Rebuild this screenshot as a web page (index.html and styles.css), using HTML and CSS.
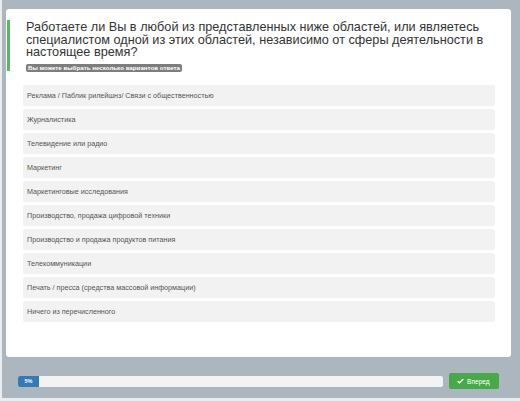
FILE: index.html
```html
<!DOCTYPE html>
<html lang="ru">
<head>
<meta charset="utf-8">
<link rel="stylesheet" href="styles.css">
</head>
<body>
<div class="page">
  <div class="card">
    <div class="question">
      <div class="title">Работаете ли Вы в любой из представленных ниже областей, или являетесь специалистом одной из этих областей, независимо от сферы деятельности в настоящее время?</div>
      <span class="badge">Вы можете выбрать несколько вариантов ответа</span>
    </div>
    <div class="options">
      <div class="option">Реклама / Паблик рилейшнз/ Связи с общественностью</div>
      <div class="option">Журналистика</div>
      <div class="option">Телевидение или радио</div>
      <div class="option">Маркетинг</div>
      <div class="option">Маркетинговые исследования</div>
      <div class="option">Производство, продажа цифровой техники</div>
      <div class="option">Производство и продажа продуктов питания</div>
      <div class="option">Телекоммуникации</div>
      <div class="option">Печать / пресса (средства массовой информации)</div>
      <div class="option">Ничего из перечисленного</div>
    </div>
  </div>
  <div class="footer">
    <div class="progress"><div class="fill" style="width:21px">5%</div></div>
    <button class="next"><svg class="check" viewBox="0 0 10 8" width="7" height="6"><path d="M1 4.2 L3.6 6.6 L9 1.2" fill="none" stroke="#fff" stroke-width="1.9"/></svg>Вперед</button>
  </div>
</div>
</body>
</html>
```
FILE: styles.css
```css
html, body {
  margin: 0;
  padding: 0;
  background: #e9edf0;
}
body {
  font-family: "Liberation Sans", Arial, sans-serif;
  width: 520px;
  height: 401px;
  overflow: hidden;
}
.page {
  margin-left: 2px;
  width: 518px;
  height: 398px;
  background: #abb6be;
  padding: 9px 0 0 4px;
  box-sizing: border-box;
}
.card {
  width: 505px;
  height: 348px;
  background: #fff;
  border-radius: 3px;
  padding: 11px 0 0 1px;
  box-sizing: border-box;
}
.question {
  border-left: 3px solid #5cb85c;
  padding-left: 16px;
  height: 51px;
  box-sizing: border-box;
}
.title {
  font-size: 12.7px;
  line-height: 12.5px;
  color: #333;
  width: 480px;
  padding-top: 1px;
}
.badge {
  display: inline-block;
  margin-top: 5px;
  background: #7d7d7d;
  color: #fff;
  font-size: 6.2px;
  font-weight: bold;
  line-height: 8px;
  height: 8px;
  padding: 0 2px;
  border-radius: 2px;
  vertical-align: top;
}
.options {
  margin: 14px 0 0 16px;
  width: 472px;
  display: flex;
  flex-direction: column;
  gap: 3px;
}
.option {
  height: 21px;
  line-height: 21px;
  background: #f2f2f2;
  border-radius: 2px;
  padding-left: 4px;
  font-size: 7.2px;
  color: #555;
}
.footer {
  display: flex;
  align-items: center;
  gap: 6px;
  margin-top: 16px;
  padding-left: 12px;
}
.progress {
  width: 425px;
  height: 11px;
  background: #f3f3f3;
  border-radius: 2px;
  overflow: hidden;
}
.fill {
  height: 100%;
  background: #337ab7;
  color: #fff;
  font-size: 5.5px;
  font-weight: bold;
  line-height: 11px;
  text-align: center;
}
.next {
  width: 50px;
  height: 16px;
  border: none;
  border-radius: 2px;
  background: #47a947;
  color: #fff;
  font-family: "Liberation Sans", Arial, sans-serif;
  font-size: 6.6px;
  padding: 0 0 0 8px;
  display: flex;
  align-items: center;
  gap: 3px;
}
.check {
  display: block;
}
```
